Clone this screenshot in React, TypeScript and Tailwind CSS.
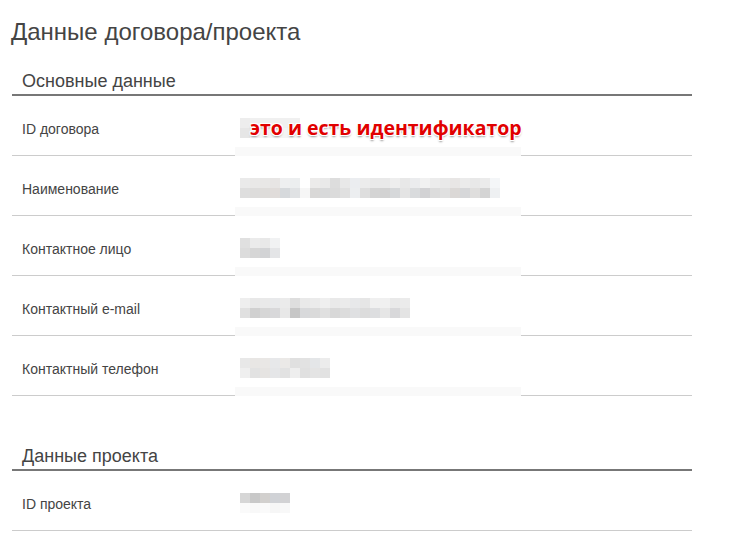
import React from "react";

type Cells = { top: string[]; bottom: string[] };

const rows: { label: string; cells: Cells; note?: string }[] = [
  {
    label: "ID договора",
    cells: {
      top: ["#ededed", "#f0f0f0", "#f0f0f0", "#f0f0f0", "#f0f0f0", "#f0f0f0"],
      bottom: ["#e6e6e6", "#f2f2f2", "#f4f4f4", "#f4f4f4", "#f4f4f4", "#f4f4f4"],
    },
    note: "это и есть идентификатор",
  },
  {
    label: "Наименование",
    cells: {
      top: [
        "#eaeaea", "#e9e8e7", "#e8e7e6", "#e7e5e4", "#eeeff0", "#eceeef", "#ffffff", "#ecebea", "#e9e9e9",
        "#dddddd", "#e8e8e8", "#ebedf0", "#ececec", "#e9e9e9", "#e9e9e9", "#eeeeee", "#e8e8e8", "#ebecee",
        "#f1f1f1", "#ececec", "#e9e9e9", "#e8e6e5", "#ebebeb", "#e8e8e8", "#ebebeb", "#f4f6f8",
      ],
      bottom: [
        "#dedede", "#dddcdb", "#dedcda", "#e0dcda", "#d6d9dc", "#e0e2e4", "#f6f6f6", "#d9d8d7", "#d8d9da",
        "#dbdbdb", "#e0e0e0", "#eceef0", "#dedede", "#d4d4d4", "#d2d2d2", "#d6d8da", "#e4e4e4", "#d9dbdd",
        "#d2d2d4", "#dcdcdc", "#e0e0e0", "#dbd8d6", "#d6d7d9", "#dfdedd", "#d4d4d4", "#eef0f2",
      ],
    },
  },
  {
    label: "Контактное лицо",
    cells: {
      top: ["#e0e0e0", "#ebebeb", "#e8e8e8", "#f1f2f3"],
      bottom: ["#dcdcdc", "#d6d6d6", "#d2d3d5", "#e4e5e7"],
    },
  },
  {
    label: "Контактный e-mail",
    cells: {
      top: [
        "#eeeeee", "#e8e8e8", "#e9e9e9", "#e8e9eb", "#ebebeb", "#dedede", "#e9e9e9", "#ebebeb", "#efefef",
        "#e9e9e9", "#ebebeb", "#e7e8ea", "#e6e6e6", "#f0f0f0", "#f0f0f0", "#e9e9e9", "#ebebeb",
      ],
      bottom: [
        "#e0e0e0", "#d0d0d0", "#d6d6d6", "#d8d8da", "#e8e8e8", "#c6c6c6", "#d8d9db", "#dadada", "#e0e0e0",
        "#d8d8d8", "#dcdcdc", "#dfe0e2", "#dcdcdc", "#dddee0", "#e6e6e6", "#d8d8da", "#e4e4e4",
      ],
    },
  },
  {
    label: "Контактный телефон",
    cells: {
      top: ["#e8e8e8", "#e8e6e4", "#e9e7e5", "#e7e8ea", "#ebe9e7", "#e0e0e0", "#e2e2e2", "#e4e6e8", "#ececec"],
      bottom: ["#efefef", "#e2e2e2", "#e6e4e2", "#e5e6e8", "#e2e2e2", "#eeeeee", "#e0e0e0", "#e4e4e4", "#e2e2e2"],
    },
  },
];

const projectRow = {
  label: "ID проекта",
  cells: {
    top: ["#d6d6d6", "#c8c8c8", "#d2d0ce", "#d0d2d6", "#d2d2d4"],
    bottom: ["#fafafa", "#f8f8f8", "#fafafa", "#f6f6f6", "#f8f8f8"],
  },
};

function Blur({ cells }: { cells: Cells }) {
  return (
    <div className="flex flex-col">
      {[cells.top, cells.bottom].map((line, i) => (
        <div key={i} className="flex">
          {line.map((c, j) => (
            <span key={j} className="block w-[10px] h-[10px]" style={{ backgroundColor: c }} />
          ))}
        </div>
      ))}
    </div>
  );
}

function Row({ label, cells, note, mask = true }: { label: string; cells: Cells; note?: string; mask?: boolean }) {
  return (
    <div className="h-[60px] flex items-center pt-[5px] pl-[10px] border-b border-[#cccccc]">
      <div className="w-[218px] text-[14px] leading-[18px] text-[#444444] pt-[2px]">{label}</div>
      <div className="relative self-stretch flex items-center">
        <Blur cells={cells} />
        {note && (
          <span
            className="absolute left-[10px] top-[15px] whitespace-nowrap font-['Open_Sans'] font-bold text-[19.5px] leading-[24px] text-[#e10000] [text-shadow:1px_1px_0_#fff,-1px_-1px_0_#fff,1px_-1px_0_#fff,-1px_1px_0_#fff,0_2px_2px_#999]"
          >
            {note}
          </span>
        )}
        {mask && <div className="absolute left-[-5px] bottom-[-1px] w-[286px] h-[9px] bg-[#f9f9f9]" />}
      </div>
    </div>
  );
}

function SectionHeader({ title, className }: { title: string; className?: string }) {
  return (
    <div className={"pl-[10px] pb-[3px] border-b-2 border-[#777777] " + (className ?? "")}>
      <h2 className="text-[18px] leading-[20px] text-[#444444]">{title}</h2>
    </div>
  );
}

export default function App() {
  return (
    <div className="w-[743px] h-[537px] overflow-hidden bg-white font-['Liberation_Sans',Arial,sans-serif]">
      <div className="w-[680px] ml-[12px]">
        <h1 className="-ml-[1px] mt-[19px] text-[24px] leading-[26px] text-[#444444]">Данные договора/проекта</h1>
        <SectionHeader title="Основные данные" className="mt-[26px]" />
        {rows.map((r) => (
          <Row key={r.label} {...r} />
        ))}
        <SectionHeader title="Данные проекта" className="mt-[50px]" />
        <Row {...projectRow} mask={false} />
      </div>
    </div>
  );
}
